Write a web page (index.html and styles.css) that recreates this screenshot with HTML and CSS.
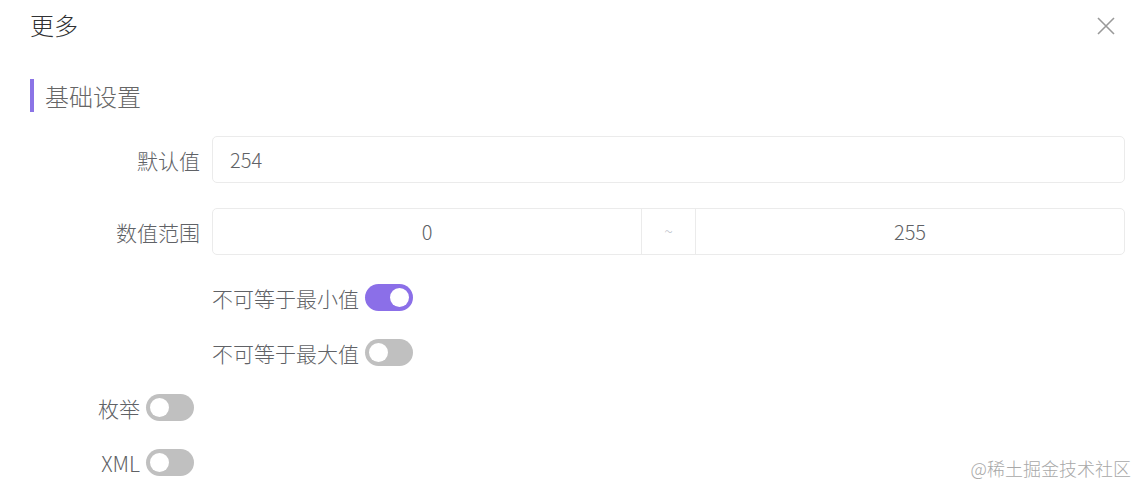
FILE: index.html
```html
<!DOCTYPE html>
<html lang="zh">
<head>
<meta charset="utf-8">
<title>更多</title>
<link rel="stylesheet" href="styles.css">
</head>
<body>
<div class="dialog">
  <div class="header">
    <span class="title">更多</span>
    <span class="close" aria-label="关闭">
      <svg width="18" height="18" viewBox="0 0 18 18"><path d="M1 1 L17 17 M17 1 L1 17" stroke="#999" stroke-width="1.6" fill="none"/></svg>
    </span>
  </div>
  <div class="section">
    <span class="bar"></span>
    <span class="section-title">基础设置</span>
  </div>
  <div class="form">
    <div class="row">
      <label class="label">默认值</label>
      <div class="input">254</div>
    </div>
    <div class="row row-range">
      <label class="label">数值范围</label>
      <div class="range">
        <div class="range-part">0</div>
        <div class="range-sep">~</div>
        <div class="range-part">255</div>
      </div>
    </div>
    <div class="switch-row indent">
      <span class="switch-label">不可等于最小值</span>
      <span class="switch on"><span class="knob"></span></span>
    </div>
    <div class="switch-row indent">
      <span class="switch-label">不可等于最大值</span>
      <span class="switch"><span class="knob"></span></span>
    </div>
    <div class="switch-row short">
      <span class="switch-label short-label">枚举</span>
      <span class="switch"><span class="knob"></span></span>
    </div>
    <div class="switch-row short">
      <span class="switch-label short-label">XML</span>
      <span class="switch"><span class="knob"></span></span>
    </div>
  </div>
  <div class="watermark">@稀土掘金技术社区</div>
</div>
</body>
</html>
```
FILE: styles.css
```css
html, body {
  margin: 0;
  padding: 0;
  background: #ffffff;
}
body {
  font-family: "Noto Sans CJK SC", "Noto Sans", sans-serif;
  font-weight: 300;
  color: #606266;
}
.dialog {
  position: relative;
  width: 1148px;
  height: 495px;
  overflow: hidden;
}
.header {
  display: flex;
  justify-content: space-between;
  align-items: center;
  padding: 7px 33px 0 30px;
  height: 36px;
}
.title {
  font-size: 24px;
  line-height: 36px;
  color: #303133;
}
.close {
  display: flex;
  width: 18px;
  height: 18px;
  margin-top: 2px;
}
.section {
  display: flex;
  align-items: center;
  margin: 36px 0 0 30px;
  height: 33px;
}
.bar {
  width: 4px;
  height: 33px;
  background: #8b74e6;
}
.section-title {
  margin-left: 11px;
  font-size: 24px;
  line-height: 32px;
  color: #666666;
}
.form {
  margin-top: 24px;
  padding-right: 23px;
}
.row {
  display: flex;
  align-items: center;
  height: 47px;
}
.row-range {
  margin-top: 25px;
}
.label {
  width: 212px;
  flex: none;
  text-align: right;
  padding-right: 12px;
  box-sizing: border-box;
  font-size: 21px;
  color: #606266;
}
.input {
  flex: 1;
  height: 47px;
  box-sizing: border-box;
  border: 1px solid #ebebeb;
  border-radius: 5px;
  padding-left: 17px;
  font-size: 20px;
  line-height: 45px;
  color: #606266;
}
.range {
  flex: 1;
  display: flex;
  height: 47px;
  box-sizing: border-box;
  border: 1px solid #ebebeb;
  border-radius: 5px;
}
.range-part {
  flex: 1;
  text-align: center;
  font-size: 20px;
  line-height: 45px;
  color: #606266;
}
.range-sep {
  width: 53px;
  border-left: 1px solid #ebebeb;
  border-right: 1px solid #ebebeb;
  text-align: center;
  font-size: 16px;
  line-height: 45px;
  color: #c0c4cc;
}
.switch-row {
  display: flex;
  align-items: center;
  height: 55px;
}
.switch-row.indent {
  padding-left: 212px;
}
.row-range + .switch-row {
  margin-top: 15px;
}
.switch-row.short {
  padding-left: 96px;
}
.switch-label {
  font-size: 21px;
  color: #606266;
  margin-right: 6px;
}
.short-label {
  min-width: 44px;
  text-align: right;
}
.switch {
  position: relative;
  display: inline-block;
  width: 48px;
  height: 27px;
  border-radius: 14px;
  background: #c0c0c0;
}
.switch.on {
  background: #8b6fe8;
}
.knob {
  position: absolute;
  top: 4px;
  left: 4px;
  width: 19px;
  height: 19px;
  border-radius: 50%;
  background: #ffffff;
}
.switch.on .knob {
  left: 25px;
}
.watermark {
  position: absolute;
  right: 17px;
  bottom: 16px;
  font-size: 18px;
  line-height: 22px;
  color: #a8a8a8;
  text-shadow: 0 0 1px #ffffff;
}
```
